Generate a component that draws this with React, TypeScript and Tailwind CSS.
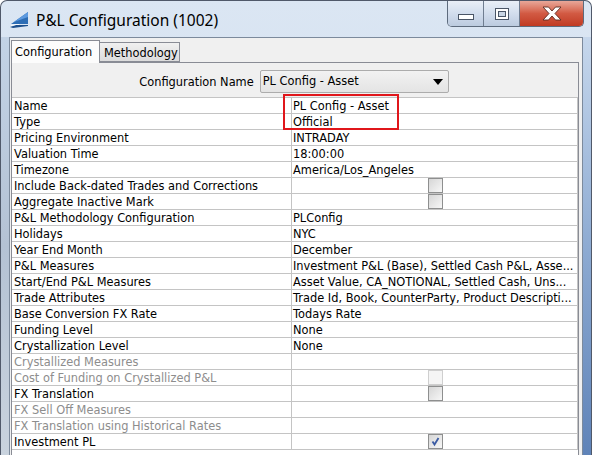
import React from 'react';

type Row = {
  label: string;
  value?: string;
  check?: 'off' | 'on' | 'disabled';
  disabled?: boolean;
};

const rows: Row[] = [
  { label: 'Name', value: 'PL Config - Asset' },
  { label: 'Type', value: 'Official' },
  { label: 'Pricing Environment', value: 'INTRADAY' },
  { label: 'Valuation Time', value: '18:00:00' },
  { label: 'Timezone', value: 'America/Los_Angeles' },
  { label: 'Include Back-dated Trades and Corrections', check: 'off' },
  { label: 'Aggregate Inactive Mark', check: 'off' },
  { label: 'P&L Methodology Configuration', value: 'PLConfig' },
  { label: 'Holidays', value: 'NYC' },
  { label: 'Year End Month', value: 'December' },
  { label: 'P&L Measures', value: 'Investment P&L (Base), Settled Cash P&L, Asse...' },
  { label: 'Start/End P&L Measures', value: 'Asset Value, CA_NOTIONAL, Settled Cash, Uns...' },
  { label: 'Trade Attributes', value: 'Trade Id, Book, CounterParty, Product Descripti...' },
  { label: 'Base Conversion FX Rate', value: 'Todays Rate' },
  { label: 'Funding Level', value: 'None' },
  { label: 'Crystallization Level', value: 'None' },
  { label: 'Crystallized Measures', disabled: true },
  { label: 'Cost of Funding on Crystallized P&L', disabled: true, check: 'disabled' },
  { label: 'FX Translation', check: 'off' },
  { label: 'FX Sell Off Measures', disabled: true },
  { label: 'FX Translation using Historical Rates', disabled: true },
  { label: 'Investment PL', check: 'on' },
];

function CheckBox({ state }: { state: 'off' | 'on' | 'disabled' }) {
  if (state === 'disabled') {
    return <div className="w-[15px] h-[15px] border border-[#cfcfcf] bg-[#f5f5f5]" />;
  }
  return (
    <div className="w-[15px] h-[15px] border border-[#8e8f8f] bg-gradient-to-br from-[#d6d6d6] to-[#f7f7f7] flex items-center justify-center">
      {state === 'on' && (
        <svg width="11" height="11" viewBox="0 0 11 11">
          <path d="M2.5 5.5 L4.5 8.5 L8.5 2" fill="none" stroke="#3b5ba3" strokeWidth="1.8" />
        </svg>
      )}
    </div>
  );
}

function AppIcon() {
  return (
    <svg width="19" height="17" viewBox="0 0 19 17">
      <path d="M1 13 L18 1 L18 13 Z" fill="#2d6db5" />
      <path d="M4 11 L18 1 L18 6 Z" fill="#5d9ae0" />
      <path d="M0 16 L6 14 L18 14 L18 15 L3 17 Z" fill="#1d4f8c" />
      <path d="M1 14.5 L6 13.5 L9 13.5" stroke="#ffffff" strokeWidth="0.8" fill="none" />
    </svg>
  );
}

function CaptionButtons() {
  return (
    <div className="flex h-[26px] border border-t-0 border-[#5d6b7d] rounded-b-[5px] overflow-hidden">
      <div className="w-[36px] h-full bg-gradient-to-b from-[#e9eff7] via-[#d2dded] to-[#bccbdf] border-r border-[#6f7d90] flex items-center justify-center">
        <svg width="16" height="6" viewBox="0 0 16 6" className="mt-[6px]">
          <rect x="0.5" y="0.5" width="15" height="5" fill="#ffffff" stroke="#4a5566" />
        </svg>
      </div>
      <div className="w-[36px] h-full bg-gradient-to-b from-[#e9eff7] via-[#d2dded] to-[#bccbdf] border-r border-[#6f7d90] flex items-center justify-center">
        <svg width="14" height="12" viewBox="0 0 14 12">
          <rect x="0.5" y="0.5" width="13" height="11" fill="#ffffff" stroke="#4a5566" />
          <rect x="3.5" y="3.5" width="7" height="5" fill="#c9d5e4" stroke="#4a5566" />
        </svg>
      </div>
      <div className="w-[63px] h-full bg-gradient-to-b from-[#e8a799] via-[#d25a43] to-[#c03a22] flex items-center justify-center">
        <svg width="20" height="15" viewBox="0 0 20 15">
          <path
            d="M1 1 L6.5 1 L10 5 L13.5 1 L19 1 L13 7.5 L19 14 L13.5 14 L10 10 L6.5 14 L1 14 L7 7.5 Z"
            fill="#ffffff"
            stroke="#5a2a20"
            strokeWidth="0.9"
          />
        </svg>
      </div>
    </div>
  );
}

export default function App() {
  const font = { fontFamily: '"DejaVu Sans", Verdana, sans-serif' };

  return (
    <div className="relative w-[592px] h-[455px] overflow-hidden bg-white">
      <div className="w-full h-full rounded-t-[7px] border border-b-0 border-[#50596a] bg-gradient-to-b from-[#dbe6f3] to-[#c7d8ec] flex flex-col">
        {/* title bar */}
        <div className="h-[36px] flex items-start shrink-0">
          <div className="ml-[9px] mt-[10px]">
            <AppIcon />
          </div>
          <div
            className="ml-[7px] mt-[8px] text-[15.5px] text-black"
            style={{ fontFamily: '"Noto Sans", "Open Sans", sans-serif' }}
          >
            P&amp;L Configuration (1002)
          </div>
          <div className="flex-1" />
          <div className="mr-[7px]">
            <CaptionButtons />
          </div>
        </div>

        {/* body */}
        <div className="flex flex-1 min-h-0">
          <div className="w-[8px] shrink-0 bg-gradient-to-b from-[#c3d3e6] via-[#b4c2d4] to-[#c9d3de]" />
          <div className="flex-1 min-w-0 border border-b-0 border-[#7c8a9c] bg-[#f0f0f0] pl-[1px] pr-[3px] pt-[2px] flex flex-col" style={font}>
            {/* tabs */}
            <div className="flex items-end h-[23px] shrink-0 relative z-10">
              <div className="h-[23px] w-[89px] border border-b-0 border-[#898c95] bg-[#fcfcfc] text-[11.4px] text-black pl-[3px] pt-[3px]">
                Configuration
              </div>
              <div className="h-[20px] w-[81px] -ml-px border border-[#898c95] bg-gradient-to-b from-[#f0f0f0] to-[#dcdcdc] text-[11.4px] text-black pl-[4px] pt-[2px] mb-px">
                Methodology
              </div>
            </div>
            <div className="flex-1 -mt-px border border-b-0 border-[#898c95] bg-[#f0f0f0] flex flex-col">
              <div className="h-[34px] shrink-0 flex items-start justify-center gap-[6px] pt-[7px] pr-[2px]">
                <div className="text-[11.4px] text-black mt-[4px]">Configuration Name</div>
                <div className="w-[189px] h-[23px] border border-[#acacac] rounded-[2px] bg-gradient-to-b from-[#f2f2f2] to-[#e4e4e4] flex items-center pl-[2px] pr-[5px]">
                  <span className="text-[11.4px] text-black flex-1">PL Config - Asset</span>
                  <svg width="10" height="6" viewBox="0 0 10 6">
                    <path d="M0 0 L10 0 L5 6 Z" fill="#000000" />
                  </svg>
                </div>
              </div>
              <div className="flex-1 border-t border-[#c4c4c4] bg-white">
                {rows.map((r) => (
                  <div key={r.label} className="flex h-[16px] border-b border-[#c4c4c4]">
                    <div
                      className={`w-[280px] shrink-0 border-r border-[#c4c4c4] pl-[2px] text-[11.4px] leading-[16px] whitespace-nowrap overflow-hidden ${
                        r.disabled ? 'text-[#8d8d8d]' : 'text-black'
                      }`}
                    >
                      {r.label}
                    </div>
                    <div className="flex-1 min-w-0 border-r border-[#c4c4c4] pl-[1px] text-[11.4px] leading-[16px] text-black whitespace-nowrap overflow-hidden flex justify-center">
                      {r.check ? (
                        <CheckBox state={r.check} />
                      ) : (
                        <span className="flex-1">{r.value}</span>
                      )}
                    </div>
                  </div>
                ))}
              </div>
            </div>
          </div>
          <div className="w-[8px] shrink-0 bg-gradient-to-b from-[#c6d7ec] via-[#8eabd2] to-[#5f83b8]" />
        </div>
      </div>

      {/* highlight box */}
      <div className="absolute left-[283px] top-[94px] w-[116px] h-[36px] border-2 border-[#e0161b]" />
    </div>
  );
}
